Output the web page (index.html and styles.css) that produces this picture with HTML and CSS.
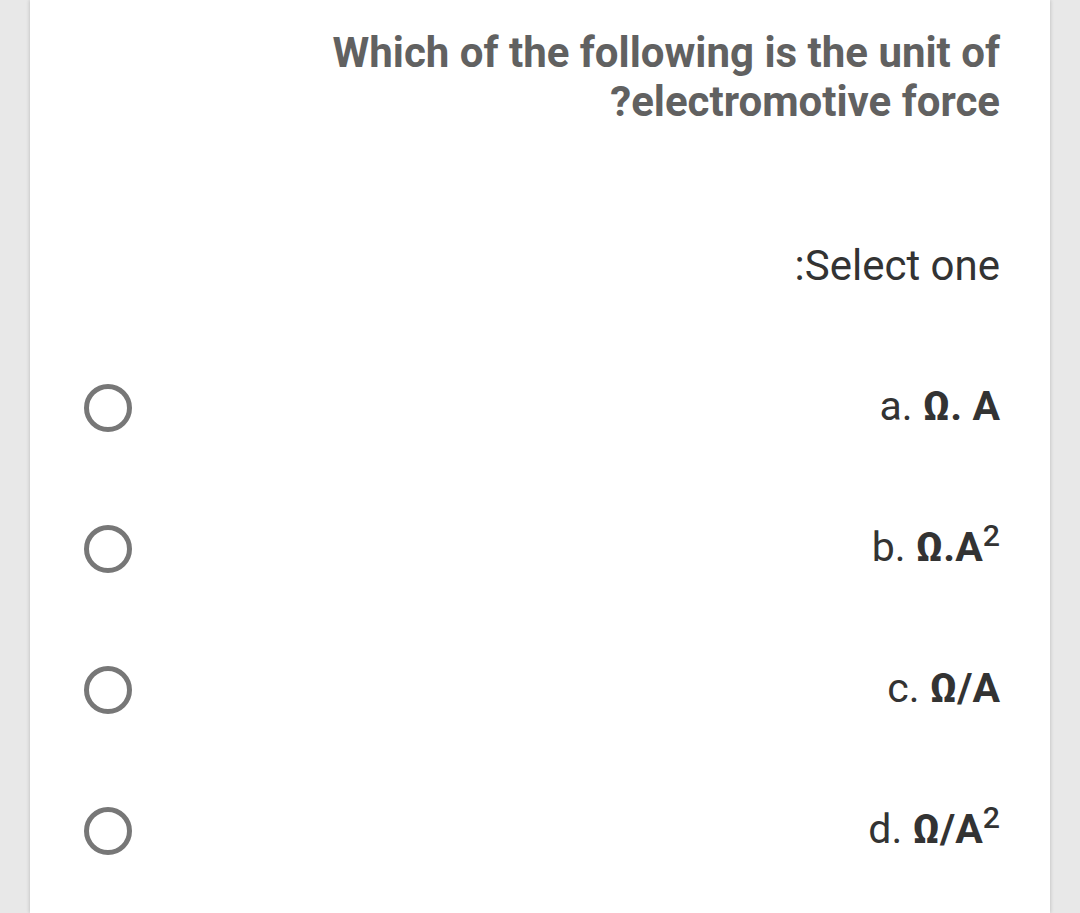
FILE: index.html
```html
<!DOCTYPE html>
<html lang="en">
<head>
<meta charset="utf-8">
<title>Question</title>
<link rel="stylesheet" href="styles.css">
</head>
<body>
<div class="card">
  <div class="question" dir="rtl">Which of the following is the unit of<br>electromotive force?</div>
  <div class="prompt" dir="rtl">Select one:</div>
  <div class="options">
    <label class="option">
      <span class="radio"></span>
      <span class="answer" dir="rtl"><span class="letter">a.</span> <b>Ω. A</b></span>
    </label>
    <label class="option">
      <span class="radio"></span>
      <span class="answer" dir="rtl"><span class="letter">b.</span> <b>Ω.A<sup>2</sup></b></span>
    </label>
    <label class="option">
      <span class="radio"></span>
      <span class="answer" dir="rtl"><span class="letter">c.</span> <b>Ω/A</b></span>
    </label>
    <label class="option">
      <span class="radio"></span>
      <span class="answer" dir="rtl"><span class="letter">d.</span> <b>Ω/A<sup>2</sup></b></span>
    </label>
  </div>
</div>
</body>
</html>
```

FILE: styles.css
```css
html, body {
  margin: 0;
  padding: 0;
  height: 100%;
}
body {
  background: #e8e8e8;
  font-family: Roboto, "Noto Sans", sans-serif;
  overflow: hidden;
}
.card {
  margin: 0 30px;
  height: 913px;
  background: #ffffff;
  box-shadow: 0 0 4px rgba(0, 0, 0, 0.22);
  box-sizing: border-box;
  padding: 28px 50px 0 54px;
}
.question {
  font-size: 42px;
  font-weight: 700;
  line-height: 49px;
  color: #616161;
  text-align: right;
}
.prompt {
  margin-top: 116px;
  font-size: 42px;
  line-height: 48px;
  color: #333333;
  text-align: right;
}
.options {
  margin-top: 47px;
  display: flex;
  flex-direction: column;
}
.option {
  height: 141px;
  display: flex;
  align-items: center;
  justify-content: space-between;
}
.radio {
  width: 48px;
  height: 48px;
  border: 5px solid #777777;
  border-radius: 50%;
  box-sizing: border-box;
  flex: none;
}
.answer {
  font-size: 41px;
  line-height: 48px;
  color: #333333;
  margin-top: -4px;
}
.answer b {
  font-weight: 700;
}
.answer sup {
  font-size: 0.74em;
  line-height: 0;
  vertical-align: 0.5em;
  font-weight: 500;
}
```
